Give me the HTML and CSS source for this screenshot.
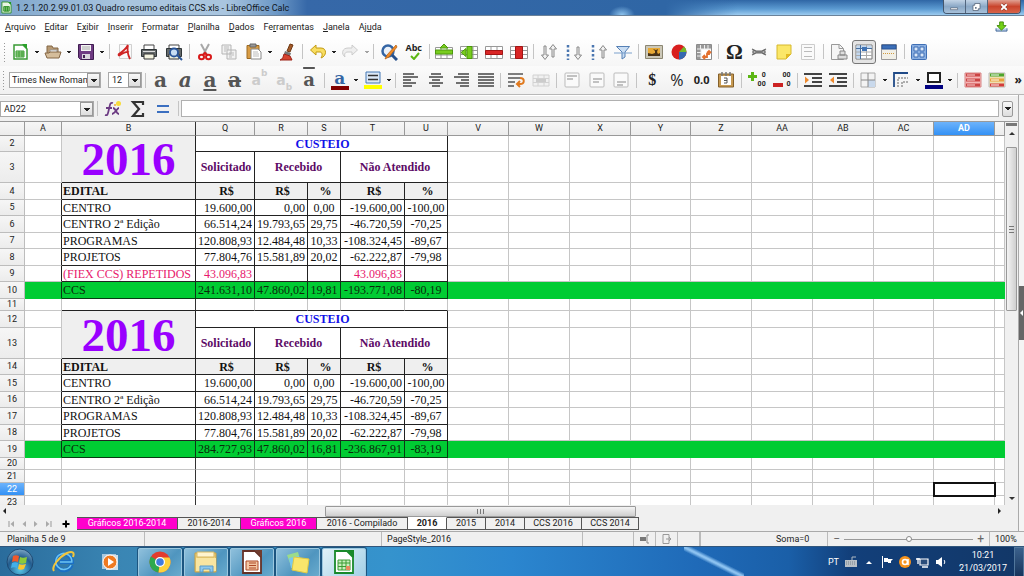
FILE: index.html
```html
<!DOCTYPE html>
<html lang="pt-BR">
<head>
<meta charset="utf-8">
<title>1.2.1.20.2.99.01.03 Quadro resumo editais CCS.xls - LibreOffice Calc</title>
<link rel="stylesheet" href="styles.css">
</head>
<body>
<div class="desktop">
<header class="titlebar">
  <svg class="app-icon" viewBox="0 0 12 14"><path d="M1 1h7l3 3v9H1z" fill="#e9f6e4" stroke="#2f8f2a"/><path d="M8 1l3 3V1z" fill="#1d9a1d"/><path d="M3 6h6v5H3zM5 6v5M7 6v5" fill="#7fc470" stroke="#2f8f2a"/></svg>
  <h1 class="title">1.2.1.20.2.99.01.03 Quadro resumo editais CCS.xls - LibreOffice Calc</h1>
  <div class="winbtns">
    <button class="wb" aria-label="Minimizar"><svg viewBox="0 0 24 13"><path d="M7.500 7.500h8v2h-8z" fill="#fff" stroke="#47566b" stroke-width=".7"/></svg></button>
    <button class="wb" aria-label="Restaurar"><svg viewBox="0 0 24 13"><path d="M10 2.500h6v6h-2v2H8v-6h2z" fill="#fff" stroke="#47566b" stroke-width=".8"/><path d="M10.500 6.500h1.500v2h-1.500z" fill="#47566b"/></svg></button>
    <button class="wb close" aria-label="Fechar"><svg viewBox="0 0 34 13"><path d="M14 3.500l6 6m0-6l-6 6" stroke="#6d2218" stroke-width="3"/><path d="M14 3.500l6 6m0-6l-6 6" stroke="#fff" stroke-width="2"/></svg></button>
  </div>
</header>
<nav class="menubar">
  <button><u>A</u>rquivo</button><button><u>E</u>ditar</button><button>E<u>x</u>ibir</button><button><u>I</u>nserir</button><button><u>F</u>ormatar</button><button><u>P</u>lanilha</button><button><u>D</u>ados</button><button>Fe<u>r</u>ramentas</button><button><u>J</u>anela</button><button>Aj<u>u</u>da</button>
  <button class="update" aria-label="Atualizar"><svg viewBox="0 0 14 12"><path d="M1 8v3h12V8" fill="#b9cfe8" stroke="#3c6496"/><path d="M5 1h4v4h3L7 10 2 5h3z" fill="#73d216" stroke="#3f8a08"/></svg></button>
</nav>
<div class="toolbar standard">
  <i class="grip"></i>
  <button class="ic" aria-label="Novo"><svg viewBox="0 0 18 18"><path d="M3 2h9l4 4v10H3z" fill="#fff" stroke="#3a9b35" stroke-width="1.500"/><path d="M11 1h5v5z" fill="#2ba12b"/><path d="M5 8h8v6H5zM5 10h8M5 12h8M8 8v6M11 8v6" fill="#b8e6a6" stroke="#3a9b35"/></svg></button><button class="dd" aria-label="Opções de novo"></button>
  <button class="ic" aria-label="Abrir"><svg viewBox="0 0 18 18"><path d="M3 14V3h5l1 2h5v4" fill="#b79a74" stroke="#846645"/><path d="M6 7h7v5H6z" fill="#fff" stroke="#999"/><path d="M1 10h4l1-1h11l-2 6H3z" fill="#d5bd9b" stroke="#846645"/></svg></button><button class="dd" aria-label="Opções de abrir"></button>
  <button class="ic" aria-label="Salvar"><svg viewBox="0 0 18 18"><path d="M1.500 1.500h15v15h-13l-2-2z" fill="#6f3b83" stroke="#3f1d50"/><path d="M4 2h10v6H4z" fill="#f4f4f4"/><path d="M5 4h8M5 6h8" stroke="#aaa"/><path d="M5 11h8v5H5z" fill="#d9d5dd"/><path d="M6 12h2v3H6z" fill="#3f1d50"/></svg></button><button class="dd" aria-label="Opções de salvar"></button>
  <i class="sep"></i>
  <button class="ic" aria-label="Exportar PDF"><svg viewBox="0 0 18 18"><path d="M3.500 1.500h12v14h-12z" fill="#f9f9f9" stroke="#d0d0d0"/><path d="M12 2C10 6 6 9 3 11c-1 1 0 2 1 1 3-2 6-4 9-3M12 2c-1 4-1 8 2 14" fill="none" stroke="#cf2323" stroke-width="1.800"/></svg></button>
  <button class="ic" aria-label="Imprimir"><svg viewBox="0 0 18 18"><path d="M4 2h10v5H4z" fill="#fff" stroke="#444"/><path d="M1.500 6.500h15v7h-15z" fill="#64696a" stroke="#2e3436"/><path d="M3 8h12v1H3z" fill="#ddd"/><path d="M4 11h10v5H4z" fill="#f3f3df" stroke="#333"/></svg></button>
  <button class="ic" aria-label="Visualizar impressão"><svg viewBox="0 0 18 18"><path d="M4 2h10v4H4z" fill="#fff" stroke="#444"/><path d="M1.500 5.500h15v8h-15z" fill="#64696a" stroke="#2e3436"/><path d="M4 11h10v5H4z" fill="#f3f3df" stroke="#333"/><circle cx="9" cy="9.500" r="4" fill="#c8ddf2" stroke="#2a5598" stroke-width="1.800"/><path d="M12 12l5 5" stroke="#2a5598" stroke-width="2"/></svg></button>
  <i class="sep"></i>
  <button class="ic" aria-label="Cortar"><svg viewBox="0 0 18 18"><path d="M5 1l6 11M13 1L7 12" stroke="#a8a8a8" stroke-width="2"/><ellipse cx="5.500" cy="14" rx="2.500" ry="2.300" fill="none" stroke="#d81919" stroke-width="2"/><ellipse cx="12.500" cy="14" rx="2.500" ry="2.300" fill="none" stroke="#d81919" stroke-width="2"/><path d="M7 12l2-2 2 2" stroke="#d81919" stroke-width="2" fill="none"/></svg></button>
  <button class="ic" aria-label="Copiar"><svg viewBox="0 0 18 18"><path d="M2 2h9v9H2zM7 7h9v9H7z" fill="#f2f2f2" stroke="#b5b5b5"/><path d="M4 4h5M4 6h5M4 8h2M9 10h5M9 12h5M9 14h3" stroke="#bbb"/></svg></button>
  <button class="ic" aria-label="Colar"><svg viewBox="0 0 18 18"><path d="M2 2.500h12v13H2z" fill="#d99d45" stroke="#9c6a22"/><path d="M5 1h6v3H5z" fill="#999" stroke="#666"/><path d="M6 6h7l3 3v7H6z" fill="#fff" stroke="#888"/><path d="M8 9h5M8 11h6M8 13h6" stroke="#bbb"/></svg></button><button class="dd" aria-label="Opções de colar"></button>
  <button class="ic" aria-label="Pincel"><svg viewBox="0 0 18 18"><path d="M12 1l3 1-3 7-3-1z" fill="#a45b2a" stroke="#6e3710"/><path d="M7 8l6 2-1 3-6-2z" fill="#777"/><path d="M6 11l6 2 2 4H2c3-1 3-3 4-6z" fill="#d7432f" stroke="#9b2217"/></svg></button>
  <i class="sep"></i>
  <button class="ic" aria-label="Desfazer"><svg viewBox="0 0 18 18"><path d="M1.500 7L7 2v3h5c6 0 6 8 0 10 2-3 1-6-1-6H7v3z" fill="#f8de62" stroke="#c49b10"/></svg></button><button class="dd" aria-label="Lista de desfazer"></button>
  <button class="ic" aria-label="Refazer"><svg viewBox="0 0 18 18"><path d="M16.500 7L11 2v3H7c-6 0-7 6-3 9-1-3 0-5 3-5h4v3z" fill="#eee" stroke="#ccc"/></svg></button><button class="dd off" aria-label="Lista de refazer"></button>
  <i class="sep"></i>
  <button class="ic" aria-label="Localizar e substituir"><svg viewBox="0 0 18 18"><circle cx="8" cy="8" r="5.500" fill="#eaf1fa" stroke="#3465a4" stroke-width="2.500"/><path d="M12 12l5 5" stroke="#27508c" stroke-width="3"/><path d="M16 2L7 12l-2 4 4-2 8-10z" fill="#f28c28" stroke="#b35a0a" stroke-width=".7"/></svg></button>
  <button class="ic abc" aria-label="Ortografia">Abc<svg viewBox="0 0 12 8"><path d="M2 4l3 3 5-6" fill="none" stroke="#5cb615" stroke-width="2"/></svg></button>
  <i class="sep"></i>
  <button class="ic" aria-label="Inserir linha"><svg viewBox="0 0 18 18"><path d="M.5 4.500h17v11H.5zM.5 12h17M6 4.500v11M12 4.500v11" fill="#fff" stroke="#999"/><path d="M.5 7h17v4H.5zM9 1l4 4H5z" fill="#79cc1f" stroke="#4c9a0a"/></svg></button>
  <button class="ic" aria-label="Inserir coluna"><svg viewBox="0 0 18 18"><path d="M.5 3.500h17v12H.5zM.5 7.500h17M.5 11.500h17M13 3.500v12" fill="#fff" stroke="#999"/><path d="M7 3.500h5v12H7zM1 9.500l5-4v8z" fill="#79cc1f" stroke="#4c9a0a"/></svg></button>
  <button class="ic" aria-label="Excluir linha"><svg viewBox="0 0 18 18"><path d="M.5 3.500h17v12H.5zM6 3.500v12M12 3.500v12" fill="#fff" stroke="#999"/><path d="M.5 7.500h17v4H.5z" fill="#d92626" stroke="#a31414"/></svg></button>
  <button class="ic" aria-label="Excluir coluna"><svg viewBox="0 0 18 18"><path d="M.5 3.500h17v12H.5zM.5 7.500h17M.5 11.500h17" fill="#fff" stroke="#999"/><path d="M5.500 3.500h7v12h-7z" fill="#d92626" stroke="#a31414"/></svg></button>
  <i class="sep"></i>
  <button class="ic" aria-label="Classificar"><svg viewBox="0 0 18 18"><path d="M4 3h2v9h2.500L5 16.500 1.500 12H4zM12 14h2V6h2.500L13 1.500 9.500 6H12z" fill="#f2f2f2" stroke="#888"/></svg></button>
  <button class="ic" aria-label="Ordem crescente"><svg viewBox="0 0 18 18"><path d="M3 2v15" stroke="#4a76b0" stroke-width="2.500" stroke-dasharray="2.500 2"/><path d="M12 4h2v8h2.500L13 16.500 9.500 12H12z" fill="#f2f2f2" stroke="#888"/></svg></button>
  <button class="ic" aria-label="Ordem decrescente"><svg viewBox="0 0 18 18"><path d="M3 2v15" stroke="#4a76b0" stroke-width="2.500" stroke-dasharray="2.500 2"/><path d="M12 15h2V7h2.500L13 2.500 9.500 7H12z" fill="#f2f2f2" stroke="#888"/></svg></button>
  <button class="ic" aria-label="Autofiltro"><svg viewBox="0 0 18 18"><path d="M2.500 3.500h13L11 9v5l-3 2V9z" fill="#c9ddf3" stroke="#5580b5"/><path d="M0 10h18" stroke="#7ba0cc"/></svg></button>
  <i class="sep"></i>
  <button class="ic" aria-label="Imagem"><svg viewBox="0 0 18 18"><path d="M.5 2.500h17v13H.5z" fill="#ccc8b8" stroke="#8b8672"/><path d="M3 5h12v8H3z" fill="#e8a935"/><path d="M3 13v-3l4 1 3-1V8L8 6l3 1 2-1-1 3 1 2 2-1v3z" fill="#4a3317"/></svg></button>
  <button class="ic" aria-label="Gráfico"><svg viewBox="0 0 18 18"><circle cx="9" cy="9" r="7.500" fill="#d81e1e"/><path d="M9 9h7.500A7.500 7.500 0 0 1 9 16.500z" fill="#3568b0"/><path d="M9 9l5-5.500A7 7 0 0 1 16.500 9z" fill="#72b82a"/></svg></button>
  <button class="ic" aria-label="Tabela dinâmica"><svg viewBox="0 0 18 18"><path d="M1.500 1.500h15v15h-15z" fill="#fff" stroke="#8b8b8b"/><path d="M2 2h14v4H2zM2 6h4v10H2z" fill="#999"/><path d="M5.500 2v4M9.500 2v4M13 2v4M2 6h14M6 6v10M2 9.500h4M2 13h4" stroke="#eee"/><path d="M9 14h3v-3h2V9m-2 1l2-2 2 2m-6 2l-2 2 2 2" fill="none" stroke="#e3702d" stroke-width="1.800"/></svg></button>
  <i class="sep"></i>
  <button class="ic omega" aria-label="Caractere especial">Ω</button>
  <button class="ic" aria-label="Hiperlink"><svg viewBox="0 0 18 18"><path d="M2 6l4 2h6l4-2M2 12l4-2h6l4 2M3 8h3v2H3zM12 8h3v2h-3z" fill="none" stroke="#666" stroke-width="1.200"/><path d="M6 9h6" stroke="#777" stroke-width="2"/></svg></button>
  <button class="ic" aria-label="Comentário"><svg viewBox="0 0 18 18"><path d="M2 2h14v9l-5 5H2z" fill="#fbe768" stroke="#d6b82c"/><path d="M16 11h-5v5z" fill="#e2ba22"/></svg></button>
  <button class="ic" aria-label="Cabeçalho e rodapé"><svg viewBox="0 0 18 18"><path d="M2.500 1.500h13v15h-13z" fill="#fafafa" stroke="#ccc"/><path d="M5 4.500h8M5 8.500h8M5 13.500h8" stroke="#bbb"/></svg></button>
  <i class="sep"></i>
  <button class="ic" aria-label="Intervalo de impressão"><svg viewBox="0 0 18 18"><path d="M1.500 1.500h8l4 4v11h-12z" fill="#f5f5f5" stroke="#999"/><path d="M9 1.500v4h4" fill="none" stroke="#999"/><path d="M8 12h9v4H8zM10 8h5v4h-5z" fill="#ddd" stroke="#888"/></svg></button>
  <button class="ic pressed" aria-label="Fixar linhas e colunas"><svg viewBox="0 0 18 18"><path d="M1 2h16v14H1z" fill="#fff" stroke="#777"/><path d="M1.500 2.500h15v3h-15zM1.500 5h4v10.500h-4z" fill="#c2d8f0"/><path d="M1 9h16M1 12.500h16M11.500 2v14" stroke="#aaa"/><path d="M5.500 2v14M1 5.500h16" stroke="#49709f"/><path d="M7 4h5v4H7z" fill="#3f72b4"/></svg></button>
  <button class="ic" aria-label="Dividir janela"><svg viewBox="0 0 18 18"><path d="M1.500 1.500h15v15h-15z" fill="#f1efe6" stroke="#999"/><path d="M2 2h14v4H2z" fill="#3b6fb8" stroke="#2a5598"/><path d="M3 10.500h12" stroke="#d19a3d" stroke-dasharray="1 1"/></svg></button>
  <i class="sep"></i>
  <button class="ic" aria-label="Formulário"><svg viewBox="0 0 18 18"><rect x="1.500" y="1.500" width="15" height="15" rx="1" fill="#89aee0" stroke="#3f6fb5"/><path d="M4 4h4v4H4zM10 4h4v4h-4zM4 10h4v4H4zM10 10h4v4h-4z" fill="#dbe8f8" stroke="#3f6fb5"/></svg></button>
</div>
<div class="toolbar format">
  <i class="grip"></i>
  <label class="combo font"><select aria-label="Nome da fonte"><option>Times New Roman</option></select><i class="pick"></i></label>
  <label class="combo size"><select aria-label="Tamanho da fonte"><option>12</option></select><i class="pick"></i></label>
  <i class="sep"></i>
  <button class="ic ch">a</button><button class="ic ch it">a</button><button class="ic ch un">a</button><button class="ic ch st">a</button><button class="ic dim">a<span class="high">b</span></button><button class="ic dim">a<span class="low">b</span></button><button class="ic ch ov">a</button>
  <i class="sep"></i>
  <button class="ic ch color">a</button><button class="dd" aria-label="Cor da fonte"></button>
  <button class="ic" aria-label="Cor de fundo"><svg viewBox="0 0 18 18"><path d="M2 1h14v11H2z" fill="#dce9f7" stroke="#4478b5"/><path d="M4 4.500h10M4 8.500h10" stroke="#333" stroke-width="1.500"/><path d="M0 14h18v4H0z" fill="#ff0"/></svg></button><button class="dd" aria-label="Cores de fundo"></button>
  <i class="sep"></i>
  <button class="ic" aria-label="Alinhar à esquerda"><svg viewBox="0 0 18 18"><path d="M1 3h11M1 6h15M1 9h8M1 12h13M1 15h9" stroke="#444" stroke-width="1.600"/></svg></button>
  <button class="ic" aria-label="Centralizar"><svg viewBox="0 0 18 18"><path d="M4 3h10M2 6h14M5 9h8M2 12h14M5 15h8" stroke="#444" stroke-width="1.600"/></svg></button>
  <button class="ic" aria-label="Alinhar à direita"><svg viewBox="0 0 18 18"><path d="M6 3h11M2 6h15M9 9h8M4 12h13M8 15h9" stroke="#444" stroke-width="1.600"/></svg></button>
  <button class="ic" aria-label="Justificar"><svg viewBox="0 0 18 18"><path d="M1 3h16M1 6h16M1 9h16M1 12h16M1 15h16" stroke="#444" stroke-width="1.600"/></svg></button>
  <i class="sep"></i>
  <button class="ic" aria-label="Quebrar texto"><svg viewBox="0 0 18 18"><path d="M1 3h15M1 7h12M1 11h7M1 15h6" stroke="#555" stroke-width="1.600"/><path d="M13 7c5 0 5 6 0 6h-2m2-3l-3 3 3 3" fill="none" stroke="#e07a20" stroke-width="2"/></svg></button>
  <button class="ic" aria-label="Mesclar células"><svg viewBox="0 0 18 18"><path d="M1 4h16v11H1zM1 7.500h16M1 11.500h16M6 4v11M12 4v11" fill="#f1f1f1" stroke="#d2d2d2"/><path d="M4 8h10v3H4z" fill="#ccc"/></svg></button>
  <i class="sep"></i>
  <button class="ic" aria-label="Alinhar acima"><svg viewBox="0 0 18 18"><rect x="2" y="2" width="14" height="14" rx="1" fill="#fafafa" stroke="#bbb"/><path d="M4 5h10M4 8h6" stroke="#888"/></svg></button>
  <button class="ic" aria-label="Centralizar na vertical"><svg viewBox="0 0 18 18"><rect x="2" y="2" width="14" height="14" rx="1" fill="#fafafa" stroke="#bbb"/><path d="M5 8h9M5 11h6" stroke="#888"/></svg></button>
  <button class="ic" aria-label="Alinhar abaixo"><svg viewBox="0 0 18 18"><rect x="2" y="2" width="14" height="14" rx="1" fill="#fafafa" stroke="#bbb"/><path d="M5 11h9M5 14h6" stroke="#888"/></svg></button>
  <i class="sep"></i>
  <button class="ic cur">$</button><button class="ic pct">%</button><button class="ic num">0.0</button>
  <button class="ic" aria-label="Formatar como data"><svg viewBox="0 0 18 18"><path d="M1.500 3h15v13h-15z" fill="#c79a52" stroke="#84602a"/><path d="M4 5h10v9H4z" fill="#fff"/><path d="M5 1v4M9 1v4M13 1v4" stroke="#777" stroke-width="1.500"/><path d="M7 7h3v5H7m0-2.500h3" fill="none" stroke="#555"/></svg></button>
  <i class="sep"></i>
  <button class="ic dec plus" aria-label="Adicionar casa decimal"><span>0</span><span>00</span></button>
  <button class="ic dec minus" aria-label="Excluir casa decimal"><span>00</span><span>0</span></button>
  <i class="sep"></i>
  <button class="ic" aria-label="Aumentar recuo"><svg viewBox="0 0 18 18"><path d="M0 3h18M8 7h10M8 11h10M0 15h18" stroke="#444" stroke-width="2"/><path d="M1 5.500L5 9l-4 3.500z" fill="#ee8a2e"/></svg></button>
  <button class="ic" aria-label="Diminuir recuo"><svg viewBox="0 0 18 18"><path d="M0 3h18M8 7h10M8 11h10M0 15h18" stroke="#444" stroke-width="2"/><path d="M5 5.500L1 9l4 3.500z" fill="#ee8a2e"/></svg></button>
  <i class="sep"></i>
  <button class="ic" aria-label="Bordas"><svg viewBox="0 0 18 18"><path d="M2 2h14v14H2z" fill="#f3f3f3" stroke="#aaa"/><path d="M9 9h7v7H9z" fill="#c9d9ec"/><path d="M9 2v14M2 9h14" stroke="#888"/></svg></button><button class="dd" aria-label="Lista de bordas"></button>
  <button class="ic" aria-label="Estilo da borda"><svg viewBox="0 0 18 18"><path d="M2 16V2h14" fill="none" stroke="#204a87" stroke-width="1.800"/><path d="M6 16V7h10M10 16v-5h6" fill="none" stroke="#666" stroke-dasharray="2 1"/></svg></button><button class="dd" aria-label="Lista de estilos"></button>
  <button class="ic" aria-label="Cor da borda"><svg viewBox="0 0 18 18"><path d="M3 2h12v9H3z" fill="#fff" stroke="#222" stroke-width="2"/><path d="M0 14h18v4H0z" fill="#000080"/></svg></button><button class="dd" aria-label="Lista de cores"></button>
  <i class="sep"></i>
  <button class="ic" aria-label="Formatação condicional"><svg viewBox="0 0 18 18"><path d="M1 2h16v14H1z" fill="#f5b5b5" stroke="#d78585"/><path d="M2 4h14M2 9h14M2 14h14" stroke="#cc4444" stroke-width="3"/><path d="M3 4h8M3 9h8M3 14h8" stroke="#f8dada"/></svg></button>
  <button class="ic" aria-label="Escala de cores"><svg viewBox="0 0 18 18"><path d="M1 2h16v14H1z" fill="#eee0b0" stroke="#bbb"/><path d="M2 4h14" stroke="#4ba52b" stroke-width="3"/><path d="M2 9h14" stroke="#e9a23b" stroke-width="3"/><path d="M2 14h14" stroke="#d43b3b" stroke-width="3"/><path d="M3 4h8M3 9h8M3 14h8" stroke="#fff"/></svg></button>
  <button class="more" aria-label="Mais">»</button>
</div>
<div class="work">
<main class="main">
  <div class="formula">
    <div class="combo name"><input type="text" value="AD22" aria-label="Caixa de nome"><button class="pick" aria-label="Abrir lista"></button></div>
    <i class="sep"></i>
    <button class="ic" aria-label="Assistente de funções"><svg viewBox="0 0 18 18"><path d="M9 3C6 2 6 5 5 9s-1 7-4 6M2 8h6M9 8c3 0 3 6 6 6M15 8c-2 0-4 6-7 6" fill="none" stroke="#6c3b83" stroke-width="1.800"/><circle cx="14.500" cy="3.500" r="2.500" fill="#f7dc3c"/><circle cx="11" cy="5" r="1" fill="#f3a833"/></svg></button>
    <button class="ic" aria-label="Soma"><svg viewBox="0 0 18 18"><path d="M14 5V2H4l6 7-6 7h10v-3" fill="none" stroke="#333" stroke-width="2.200"/></svg></button>
    <button class="ic" aria-label="Função"><svg viewBox="0 0 18 18"><path d="M3 6h12M3 12h12" stroke="#3b6fc0" stroke-width="2.200"/></svg></button>
    <i class="sep"></i>
    <input class="entry" type="text" aria-label="Linha de entrada">
    <button class="expand pick" aria-label="Expandir"></button>
  </div>
  <div class="sheet">
  <table class="grid">
    <colgroup><col class="c-h"><col class="c-a"><col class="c-b"><col class="c-q"><col class="c-r"><col class="c-s"><col class="c-t"><col class="c-u"><col class="c-w"><col class="c-w"><col class="c-w"><col class="c-n"><col class="c-w"><col class="c-w"><col class="c-w"><col class="c-n"><col class="c-w"><col></colgroup>
    <thead><tr><th></th><th>A</th><th class="fz">B</th><th>Q</th><th>R</th><th>S</th><th>T</th><th>U</th><th>V</th><th>W</th><th>X</th><th>Y</th><th>Z</th><th>AA</th><th>AB</th><th>AC</th><th class="on">AD</th><th></th></tr></thead>
    <tbody>
    <tr class="r16"><th>2</th><td><td class="k year" rowspan="2">2016<td class="k cost" colspan="5">CUSTEIO<td><td><td><td><td><td><td><td><td><td></tr>
    <tr class="r31"><th>3</th><td><td class="k sub">Solicitado<td class="k sub" colspan="2">Recebido<td class="k sub" colspan="2">Não Atendido<td><td><td><td><td><td><td><td><td><td></tr>
    <tr class="r17 hd"><th>4</th><td class="ka"><td class="k l">EDITAL<td class="k">R$<td class="k">R$<td class="k">%<td class="k">R$<td class="k">%<td><td><td><td><td><td><td><td><td><td></tr>
    <tr class="r16"><th>5</th><td class="ka"><td class="k l">CENTRO<td class="k">19.600,00<td class="k">0,00<td class="k c">0,00<td class="k">-19.600,00<td class="k c">-100,00<td><td><td><td><td><td><td><td><td><td></tr>
    <tr class="r17"><th>6</th><td class="ka"><td class="k l">CENTRO 2ª Edição<td class="k">66.514,24<td class="k">19.793,65<td class="k c">29,75<td class="k">-46.720,59<td class="k c">-70,25<td><td><td><td><td><td><td><td><td><td></tr>
    <tr class="r16"><th>7</th><td class="ka"><td class="k l">PROGRAMAS<td class="k">120.808,93<td class="k">12.484,48<td class="k c">10,33<td class="k">-108.324,45<td class="k c">-89,67<td><td><td><td><td><td><td><td><td><td></tr>
    <tr class="r17"><th>8</th><td class="ka"><td class="k l">PROJETOS<td class="k">77.804,76<td class="k">15.581,89<td class="k c">20,02<td class="k">-62.222,87<td class="k c">-79,98<td><td><td><td><td><td><td><td><td><td></tr>
    <tr class="r16 rep"><th>9</th><td class="ka"><td class="k l">(FIEX CCS) REPETIDOS<td class="k">43.096,83<td class="k"><td class="k c"><td class="k">43.096,83<td class="k c"><td><td><td><td><td><td><td><td><td><td></tr>
    <tr class="r17 tot"><th>10</th><td class="ka"><td class="k l">CCS<td class="k">241.631,10<td class="k">47.860,02<td class="k c">19,81<td class="k">-193.771,08<td class="k c">-80,19<td><td><td><td><td><td><td><td><td><td></tr>
    <tr class="r12"><th>11</th><td><td class="kb fz"><td class="kb"><td class="kb"><td class="kb"><td class="kb"><td class="kb"><td><td><td><td><td><td><td><td><td><td></tr>
    <tr class="r17"><th>12</th><td><td class="k year" rowspan="2">2016<td class="k cost" colspan="5">CUSTEIO<td><td><td><td><td><td><td><td><td><td></tr>
    <tr class="r31"><th>13</th><td><td class="k sub">Solicitado<td class="k sub" colspan="2">Recebido<td class="k sub" colspan="2">Não Atendido<td><td><td><td><td><td><td><td><td><td></tr>
    <tr class="r16 hd"><th>14</th><td class="ka"><td class="k l">EDITAL<td class="k">R$<td class="k">R$<td class="k">%<td class="k">R$<td class="k">%<td><td><td><td><td><td><td><td><td><td></tr>
    <tr class="r17"><th>15</th><td class="ka"><td class="k l">CENTRO<td class="k">19.600,00<td class="k">0,00<td class="k c">0,00<td class="k">-19.600,00<td class="k c">-100,00<td><td><td><td><td><td><td><td><td><td></tr>
    <tr class="r16"><th>16</th><td class="ka"><td class="k l">CENTRO 2ª Edição<td class="k">66.514,24<td class="k">19.793,65<td class="k c">29,75<td class="k">-46.720,59<td class="k c">-70,25<td><td><td><td><td><td><td><td><td><td></tr>
    <tr class="r17"><th>17</th><td class="ka"><td class="k l">PROGRAMAS<td class="k">120.808,93<td class="k">12.484,48<td class="k c">10,33<td class="k">-108.324,45<td class="k c">-89,67<td><td><td><td><td><td><td><td><td><td></tr>
    <tr class="r16"><th>18</th><td class="ka"><td class="k l">PROJETOS<td class="k">77.804,76<td class="k">15.581,89<td class="k c">20,02<td class="k">-62.222,87<td class="k c">-79,98<td><td><td><td><td><td><td><td><td><td></tr>
    <tr class="r17 tot"><th>19</th><td class="ka"><td class="k l">CCS<td class="k">284.727,93<td class="k">47.860,02<td class="k c">16,81<td class="k">-236.867,91<td class="k c">-83,19<td><td><td><td><td><td><td><td><td><td></tr>
    <tr class="r12"><th>20</th><td><td class="fz"><td><td><td><td><td><td><td><td><td><td><td><td><td><td><td></tr>
    <tr class="r13"><th>21</th><td><td class="fz"><td><td><td><td><td><td><td><td><td><td><td><td><td><td><td></tr>
    <tr class="r13"><th class="on">22</th><td><td class="fz"><td><td><td><td><td><td><td><td><td><td><td><td><td><td class="cursor"><td></tr>
    <tr class="r13"><th>23</th><td><td class="fz"><td><td><td><td><td><td><td><td><td><td><td><td><td><td><td></tr>
    </tbody>
  </table>
  <div class="vscroll"><i class="split"></i><i class="tri up"></i><i class="thumb"></i><i class="tri down"></i></div>
  </div>
  <div class="hscroll"><i class="tri left"></i><i class="thumb"></i><i class="tri right"></i></div>
  <div class="tabs">
    <button class="nav" aria-label="Primeira"><svg viewBox="0 0 8 8"><path d="M1 1v6" stroke="#999"/><path d="M6 1L2.500 4 6 7z" fill="#aaa"/></svg></button>
    <button class="nav" aria-label="Anterior"><svg viewBox="0 0 8 8"><path d="M6 1L2.500 4 6 7z" fill="#aaa"/></svg></button>
    <button class="nav" aria-label="Próxima"><svg viewBox="0 0 8 8"><path d="M2 1l3.500 3L2 7z" fill="#aaa"/></svg></button>
    <button class="nav" aria-label="Última"><svg viewBox="0 0 8 8"><path d="M7 1v6" stroke="#999"/><path d="M2 1l3.500 3L2 7z" fill="#aaa"/></svg></button>
    <button class="add" aria-label="Adicionar planilha"><svg viewBox="0 0 8 8"><path d="M4 .5v7M.5 4h7" stroke="#000" stroke-width="2"/></svg></button>
    <button class="tab pink t101">Gráficos 2016-2014</button><button class="tab t64">2016-2014</button><button class="tab pink t76">Gráficos 2016</button><button class="tab t91">2016 - Compilado</button><button class="tab active t39">2016</button><button class="tab t39">2015</button><button class="tab t39">2014</button><button class="tab t57">CCS 2016</button><button class="tab t57">CCS 2014</button>
  </div>
</main>
<aside class="side"><button class="handle" aria-label="Mostrar barra lateral"><i class="tri left"></i></button></aside>
</div>
<footer class="status">
  <span class="s-sheet">Planilha 5 de 9</span><span class="s-gap"></span><span class="s-style">PageStyle_2016</span><span class="s-lang"></span>
  <span class="s-ico"><svg viewBox="0 0 12 10"><path d="M1 3h6v4H1z" fill="#777"/><path d="M10 1H8v8h2" fill="none" stroke="#888"/></svg></span>
  <span class="s-ico"><svg viewBox="0 0 12 10"><path d="M2 .5h6v9H2zM5 5h5M8 3l2 2-2 2" fill="none" stroke="#999"/></svg></span>
  <span class="s-ico"></span>
  <span class="s-sum">Soma=0</span>
  <span class="s-zoom"><button>−</button><input type="range" aria-label="Zoom"><button>+</button></span>
  <span class="s-pct">100%</span>
</footer>
<div class="taskbar">
  <button class="start" aria-label="Iniciar"><svg viewBox="0 0 28 28"><defs><radialGradient id="orb" cx=".5" cy=".8" r=".8"><stop offset="0" stop-color="#58c6e8"/><stop offset=".6" stop-color="#235c8e"/><stop offset="1" stop-color="#7fa9c6"/></radialGradient></defs><circle cx="14" cy="14" r="13" fill="url(#orb)" stroke="#1d4a74"/><path d="M7 8c2-1 4-1 6 0l-1 6c-2-1-4-1-6 0z" fill="#f1592a"/><path d="M14 9c2 1 4 1 7 0l-1 6c-3 1-5 1-7 0z" fill="#8ccb3a"/><path d="M6 15c2-1 4-1 6 0l-1 5c-2-1-4-1-6 0z" fill="#43b0ea"/><path d="M13 16c2 1 4 1 7 0l-2 5c-2 1-4 1-6 0z" fill="#fbc72e"/></svg></button>
  <button class="pin" aria-label="Internet Explorer"><svg viewBox="0 0 24 24"><path d="M19.500 15A8 8 0 1 1 20 12H8" fill="none" stroke="#1a6fc4" stroke-width="4"/><path d="M19 15a8 8 0 1 1 .8-3H8" fill="none" stroke="#6cc4f2" stroke-width="1.600"/><path d="M2 21c-3-4 5-14 13-18 5-2 8-1 6 4" fill="none" stroke="#f2c53a" stroke-width="2"/></svg></button>
  <button class="pin" aria-label="Media Player"><svg viewBox="0 0 24 24"><path d="M4 4h14v15H4z" fill="#a9c9df"/><path d="M8 5h12v15H8z" fill="#cfe0ea"/><circle cx="12" cy="12" r="7" fill="#ee7a22" stroke="#fff"/><path d="M10 8l6 4-6 4z" fill="#fff"/></svg></button>
  <button class="task" aria-label="Chrome"><svg viewBox="0 0 24 24"><circle cx="12" cy="12" r="10.500" fill="#e33b2e"/><path d="M12 12L3 6.500A10.500 10.500 0 0 0 10.500 22.400z" fill="#2da94f"/><path d="M12 12l-1.500 10.400A10.500 10.500 0 0 0 21.500 7.500H12z" fill="#fdd23b"/><circle cx="12" cy="12" r="5" fill="#fff"/><circle cx="12" cy="12" r="3.800" fill="#3f7de0"/></svg></button>
  <button class="task" aria-label="Pastas"><svg viewBox="0 0 24 24"><path d="M1 3h21v19H1z" fill="#edcf77" stroke="#c7a148"/><path d="M3 2h17v5H3z" fill="#fff4ce" stroke="#d5b765"/><path d="M2 8h20v13H2z" fill="#f8e5a1"/><path d="M6 22v-6h13v6h-3v-3H9v3z" fill="#8cc8ee" stroke="#569ac9"/></svg></button>
  <button class="task" aria-label="Impress"><svg viewBox="0 0 24 24"><path d="M3 1h12l6 6v16H3z" fill="#fff" stroke="#663126" stroke-width="1.800"/><path d="M15 0h7v8z" fill="#703b2d"/><path d="M6 11h12v9H6z" fill="#f3c7a4" stroke="#ad4825"/><path d="M9 13h7M9 15.500h7M9 18h7" stroke="#ad4825"/></svg></button>
  <button class="task" aria-label="Notas"><svg viewBox="0 0 24 24"><path d="M1 5l11-3 3 11-10 3z" fill="#9bdc8b"/><path d="M3 8l10-2 2 11-10 1z" fill="#79c8ef"/><path d="M8 7l15 2-2 14-15-3z" fill="#f9e66b" stroke="#dfc944"/></svg></button>
  <button class="task lit" aria-label="Calc"><svg viewBox="0 0 24 24"><path d="M3 1h12l6 6v16H3z" fill="#fff" stroke="#18892a" stroke-width="1.800"/><path d="M15 0h7v8z" fill="#18892a"/><path d="M6 10h12v10H6zM6 13h12M6 16.500h12M10 10v10M14 10v10" fill="#c8efbd" stroke="#3a9b35"/><path d="M14 16h4v4h-4z" fill="#e9885f"/></svg></button>
  <div class="tray">
    <span class="pt">PT</span>
    <svg class="kb-ico" viewBox="0 0 14 12"><path d="M8 4V1h4" fill="none" stroke="#aeb9c3"/><path d="M1 4h12v7H1z" fill="#b9c0c6"/><path d="M2 6h10M2 8h10" stroke="#77828c" stroke-dasharray="1 1"/></svg>
    <svg viewBox="0 0 14 12"><path d="M4 8l3-3 3 3z" fill="#fff"/></svg>
    <svg viewBox="0 0 14 12"><path d="M2.500 0v12" stroke="#fff"/><path d="M4 2h4v1h5l-2 2v2H8V6H4z" fill="#fff"/></svg>
    <svg viewBox="0 0 14 12"><circle cx="7" cy="6" r="6" fill="#f7941d"/><circle cx="7" cy="6" r="2.500" fill="none" stroke="#fff" stroke-width="1.600"/><path d="M10 3v6" stroke="#fff" stroke-width="1.500"/></svg>
    <svg viewBox="0 0 14 12"><path d="M4 3h8v6H4z" fill="#2a4d7a" stroke="#fff" stroke-width="1.200"/><path d="M6 11h6M2 2v6M0 3h4" stroke="#fff" stroke-width="1.300"/></svg>
    <svg viewBox="0 0 14 12"><path d="M2 4h2l4-3v10L4 8H2z" fill="#fff"/><path d="M10 4c1 1 1 3 0 4" fill="none" stroke="#fff"/></svg>
    <div class="clock"><span>10:21</span><span>21/03/2017</span></div>
    <button class="peek" aria-label="Mostrar área de trabalho"></button>
  </div>
</div>
</div>
</body>
</html>
```
FILE: styles.css
```css
* { box-sizing: border-box; }
body { margin: 0; font: 9px/12px Roboto, "Open Sans", sans-serif; color: #222; background: #f0f0f0; }
button, input, select { font: inherit; color: inherit; margin: 0; padding: 0; border: 0; background: none; border-radius: 0; }
svg { display: block; flex: none; }
.desktop { display: flex; flex-direction: column; min-height: 100vh; }

.titlebar { display: flex; align-items: center; height: 16px; padding: 0 3px 0 1px; border-bottom: 1px solid #6b8299; background: radial-gradient(ellipse at 50% 100%, #8ec4ee, transparent 70%) 61% 100% / 26px 9px no-repeat, linear-gradient(90deg, #7ea6cc 0, #a9c5df 12%, #a9c5df 22%, #6c98c6 27%, #3668a8 30%, #2f66a5 65%, transparent 72%), linear-gradient(#2f66a5, #5c9bd2 60%, #9ccbef); }
.app-icon { width: 11px; height: 13px; }
.title { flex: 1; margin: 0 0 0 4px; font-size: 9px; font-weight: 400; color: #10161d; }
.winbtns { display: flex; align-self: flex-start; border: 1px solid #44566c; border-top: 0; border-radius: 0 0 4px 4px; overflow: hidden; }
.wb { width: 22px; height: 13px; background: linear-gradient(#c3d4e6, #8ba8c6 50%, #a7c1da); border-right: 1px solid #52667f; }
.wb svg { width: 100%; height: 12px; }
.wb.close { width: 32px; background: linear-gradient(#e0a193, #c9442c 50%, #d8644a); border-right: 0; }

.menubar { display: flex; align-items: center; height: 21px; padding: 0 16px 0 5px; gap: 9px; background: #fff; }
.update { margin-left: auto; }
.update svg { width: 13px; height: 11px; }

.toolbar { display: flex; align-items: center; height: 29px; padding-left: 2px; background: linear-gradient(#fff, #f6f6f6); }
.standard { padding: 0 9% 0 3px; }
.format { border-bottom: 1px solid #b8b8b8; background: linear-gradient(#fbfbfb, #f0f0f0); }
.grip { flex: none; width: 5px; height: 20px; background: radial-gradient(circle, #999 1px, transparent 1px) 0 0 / 3px 3px repeat-y; }
.ic { flex: 0 1 25px; min-width: 0; height: 24px; display: flex; align-items: center; justify-content: center; overflow: visible; }
.ic svg { width: 18px; height: 18px; }
.dd { flex: 0 0 8px; height: 20px; background: linear-gradient(#222, #222) 50% 9px / 4px 1px no-repeat, linear-gradient(#222, #222) 50% 10px / 2px 1px no-repeat; }
.dd.off { opacity: .4; }
.sep { flex: 0 0 6px; height: 15px; background: linear-gradient(#c4c4c4, #c4c4c4) 50% 0 / 1px 100% no-repeat; }
.pressed { border: 1px solid #777; border-radius: 3px; background: #e4e4e4; }
.abc { flex-direction: column; font: bold 9px/8px "Open Sans", sans-serif; }
.abc svg { width: 12px; height: 8px; align-self: flex-end; margin-right: 5px; }
.omega { font: bold 21px/20px "Liberation Serif", serif; }

.combo { position: relative; flex: none; display: flex; height: 16px; border: 1px solid #aaa; background: #fff; }
.combo select, .combo input { flex: 1; min-width: 0; padding-left: 3px; appearance: none; outline: 0; }
.font { width: 92px; margin: 0 7px 0 2px; }
.size { width: 34px; }
.font select { padding-left: 2px; }
.pick { flex: none; width: 13px; border: 1px solid #999; background: linear-gradient(#222, #222) 50% 5px / 6px 1px no-repeat, linear-gradient(#222, #222) 50% 6px / 4px 1px no-repeat, linear-gradient(#222, #222) 50% 7px / 2px 1px no-repeat, linear-gradient(#f8f8f8, #ddd); }
.ch { font: bold 20px/20px "DejaVu Serif", serif; color: #555; }
.it { font-style: italic; }
.un { text-decoration: underline; text-decoration-thickness: 2px; text-underline-offset: 2px; }
.st { text-decoration: line-through; text-decoration-thickness: 2px; }
.ov { text-decoration: overline; text-decoration-thickness: 2px; font-size: 18px; }
.dim { font: bold 14px/20px "DejaVu Sans", sans-serif; color: #ccc; }
.dim span { font-size: 9px; line-height: 10px; }
.high { align-self: flex-start; }
.low { align-self: flex-end; }
.color { font-size: 17px; line-height: 14px; height: 19px; color: #3465a4; background: linear-gradient(#800000, #800000) 50% 100% / 18px 4px no-repeat; align-items: flex-start; }
.cur { font: bold 16px/20px "Liberation Serif", serif; }
.pct { font: 16px/20px "Open Sans", sans-serif; }
.num { font: bold 11px/20px "Open Sans", sans-serif; }
.dec { flex-direction: column; align-items: flex-end; padding-right: 4px; font: bold 7px/9px Roboto, sans-serif; }
.plus { background: linear-gradient(#5cb615, #5cb615) 3px 7px / 9px 3px no-repeat, linear-gradient(#5cb615, #5cb615) 6px 4px / 3px 9px no-repeat; }
.minus { background: linear-gradient(#c22, #c22) 3px 15px / 10px 4px no-repeat; }
.more { flex: 0 0 14px; font: bold 12px/16px "Open Sans", sans-serif; text-align: right; padding-right: 2px; }

.work { flex: 1; display: flex; background: #f0f0f0; }
.main { flex: 1; min-width: 0; display: flex; flex-direction: column; }
.formula { display: flex; align-items: center; height: 27px; padding-right: 5px; border-top: 1px solid #fff; border-bottom: 1px solid #999; }
.name { width: 94px; }
.entry { flex: 1; height: 17px; margin: 0 3px 0 0; border: 1px solid #b0b0b0; background: #fff; }
.expand { height: 16px; width: 11px; border-radius: 2px; }

.sheet { display: flex; height: 383px; overflow: hidden; }
.grid { flex: 1; min-width: 0; width: 100%; table-layout: fixed; border-collapse: separate; border-spacing: 0; align-self: flex-start; background: #fff; font: 12px/14px "Liberation Serif", serif; color: #111; }
.c-h { width: 25px; } .c-a { width: 37px; } .c-b { width: 134px; } .c-q { width: 59px; } .c-r { width: 53px; } .c-s { width: 33px; } .c-t { width: 64px; } .c-u { width: 43px; } .c-w { width: 61px; } .c-n { width: 60px; }
.grid th { padding: 0; font: 9px/11px Roboto, sans-serif; text-align: center; color: #222; background: linear-gradient(#f6f6f6, #ececec); border: solid #bdbdbd; border-width: 0 1px 1px 0; }
.grid thead th { height: 14px; border-color: #999; }
.grid .on { color: #fff; background: linear-gradient(#6db3fb, #3391f5); }
.grid thead .on { font-weight: 700; }
.grid td { padding: 0 2px 0 0; overflow: hidden; white-space: nowrap; text-align: right; border: solid #c6c6c6; border-width: 0 1px 1px 0; }
.r12 { height: 12px; } .r13 { height: 13px; } .r16 { height: 16px; } .r17 { height: 17px; } .r31 { height: 31px; }
.grid .k { border-color: #222; }
.grid .ka { border-right-color: #222; }
.grid .kb { border-bottom-color: #222; }
.grid .fz { border-right-color: #333; }
.grid .c { padding: 0; text-align: center; }
.grid .year { padding: 0; overflow: visible; text-align: center; font-size: 47px; line-height: 46px; font-weight: 700; color: #90f; background: #efefef; }
.grid .cost { padding: 0 0 0 2px; text-align: center; font-weight: 700; color: #1010e8; }
.grid .sub { padding: 0 0 0 2px; text-align: center; font-weight: 700; color: #5d0a66; }
.grid .hd .k { padding: 0 0 0 3px; font-weight: 700; text-align: center; background: #efefef; }
.grid .l, .grid .hd .l { padding: 0 0 0 1px; text-align: left; }
.grid .rep .k { color: #e8186c; }
.grid .tot td { background: #0c3; border-color: #0c3; color: #0a2a0a; }
.grid .tot .k { border-color: #083a14; }
.grid .tot .ka { border-right-color: #083a14; }
.grid .cursor { outline: 2px solid #111; outline-offset: -1px; }

.vscroll { flex: none; display: flex; flex-direction: column; align-items: center; width: 13px; padding-top: 1px; background: #f0f0f0; }
.split { width: 11px; height: 3px; background: #777; }
.tri { flex: none; width: 0; height: 0; border: 3px solid transparent; }
.up { border-bottom-color: #333; margin: 3px 0 12px; }
.down { border-top-color: #333; margin: auto 0 2px; }
.left { border-right-color: #222; }
.right { border-left-color: #222; }
.thumb { border: 1px solid #999; border-radius: 1px; }
.vscroll .thumb { width: 11px; height: 43%; background: repeating-linear-gradient(#777 0 1px, transparent 1px 3px) 50% 50% / 5px 7px no-repeat, linear-gradient(90deg, #f4f4f4, #cfcfcf); }
.hscroll { display: flex; align-items: center; height: 12px; padding-right: 14px; }
.hscroll .thumb { width: 31%; height: 11px; margin: 0 auto 0 319px; background: repeating-linear-gradient(90deg, #777 0 1px, transparent 1px 3px) 50% 50% / 7px 5px no-repeat, linear-gradient(#f4f4f4, #cfcfcf); }
.tabs { display: flex; height: 14px; padding-left: 6px; }
.nav { width: 12px; }
.nav svg, .add svg { width: 8px; height: 8px; margin: 0 auto; }
.add { width: 23px; }
.tab { height: 13px; border: solid #555; border-width: 1px 1px 1px 0; line-height: 11px; background: #f0f0f0; white-space: nowrap; }
.pink { background: #f0c; color: #fff; }
.active { background: #fff; font-weight: 700; border-top-color: #fff; }
.t101 { width: 101px; } .t64 { width: 63px; } .t76 { width: 76px; } .t91 { width: 91px; } .t39 { width: 39px; } .t57 { width: 57px; }
.side { flex: none; display: flex; align-items: center; width: 6px; border-left: 1px solid #aaa; background: #f4f4f4; }
.handle { display: flex; align-items: center; width: 5px; height: 54px; background: #666; }
.handle .left { border-right-color: #fff; margin-left: -2px; }

.status { display: flex; align-items: stretch; height: 15px; border-top: 1px solid #aaa; line-height: 14px; background: #f0f0f0; }
.status span { border-right: 1px solid #bbb; }
.s-sheet { flex: 0 0 145px; padding-left: 7px; }
.s-gap { flex: 0 0 237px; }
.s-style { flex: 0 0 201px; padding-left: 5px; }
.s-lang { flex: 0 0 51px; }
.s-ico { flex: 0 0 22px; display: flex; align-items: center; justify-content: center; }
.s-ico svg { width: 12px; height: 10px; }
.s-sum { flex: 1; padding-left: 58px; text-align: center; background: linear-gradient(#bbb, #bbb) 0 0 / 1px 100% no-repeat; }
.s-zoom { flex: 0 0 107px; display: flex; align-items: center; gap: 4px; padding: 0 5px; }
.s-zoom button { font-size: 12px; color: #666; }
.s-zoom input { flex: 1; min-width: 0; height: 9px; appearance: none; background: linear-gradient(#999, #999) 0 50% / 100% 1px no-repeat; }
.s-zoom input::-webkit-slider-thumb { appearance: none; width: 6px; height: 6px; border: 1px solid #888; border-radius: 50%; background: #fff; }
.status .s-pct { flex: 0 0 34px; padding-left: 5px; border: 0; }

.taskbar { display: flex; align-items: center; height: 31px; gap: 2px; border-top: 1px solid #31567c; background: linear-gradient(to top right, transparent 43%, #8cc2f0 49%, #8cc2f0 51%, transparent 57%) 71% 0 / 60px 100% no-repeat, linear-gradient(90deg, #2a6c9c 0, #3a86b4 12%, #3593cd 38%, #2b86cf 50%, #1f6ab8 68%, #1a5fa8 77%, #123f7a 83%, #123767 100%); }
.start { width: 40px; }
.start svg { width: 28px; height: 28px; margin: 0 auto; }
.pin { width: 44px; }
.pin svg { width: 24px; height: 24px; margin: 0 auto; }
.pin + .task { margin-left: 4px; }
.task { width: 44px; height: 29px; border: 1px solid #9cc8e0; border-radius: 2px; box-shadow: 0 0 0 1px #1c5580; background: linear-gradient(135deg, #8fc0dc, #4f95bf 60%, #69abcd); }
.task svg { width: 24px; height: 24px; margin: 0 auto; }
.lit { background: linear-gradient(135deg, #e0f1f8, #a3d0e6); }
.tray { display: flex; align-items: center; align-self: stretch; gap: 4px; margin-left: auto; color: #fff; }
.tray svg { width: 14px; height: 12px; }
.tray .kb-ico { margin-left: 1px; }
.clock { display: flex; flex-direction: column; align-items: center; width: 54px; margin-left: 4px; line-height: 13px; }
.peek { width: 10px; height: 30px; border: 1px solid #51779c; background: linear-gradient(#3b618c, #16345c); }
```
